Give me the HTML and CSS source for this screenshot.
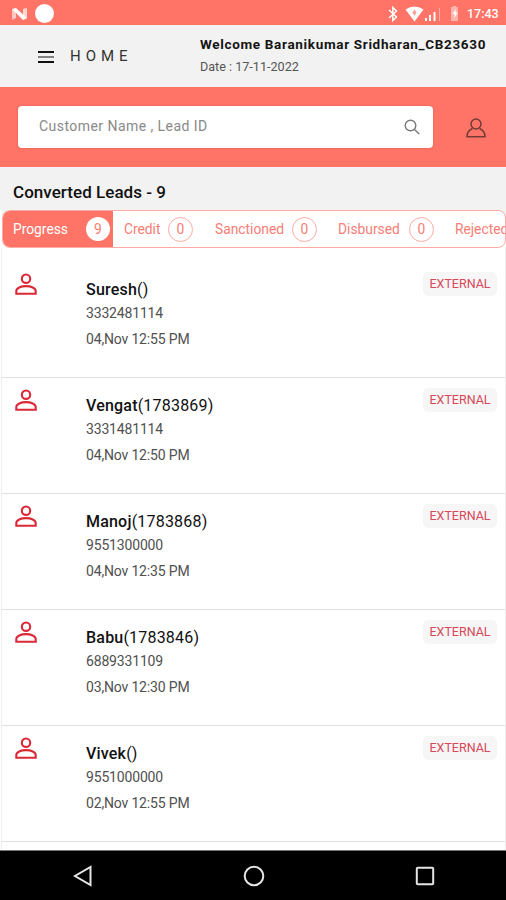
FILE: index.html
```html
<!DOCTYPE html>
<html lang="en">
<head>
<meta charset="utf-8">
<title>Converted Leads</title>
<link rel="stylesheet" href="styles.css">
</head>
<body>
<svg class="defs" width="0" height="0">
  <symbol id="person" viewBox="0 0 22 24">
    <circle cx="11" cy="5.700" r="4.200"/>
    <path d="M1.300 20.700v-2.600c0-3 4.600-5 9.700-5s9.700 2 9.700 5v2.600z"/>
  </symbol>
</svg>
<div class="screen">
  <div class="status">
    <svg class="n-logo" viewBox="0 0 17 14"><path d="M1 3l4-2v10l-4 2z" fill="#ffc9c3"/><path d="M12 2l4-1v10l-4 2z" fill="#ffd8d4"/><path d="M1 2l4-1 11 10-4 2z" fill="#fff"/></svg>
    <span class="dot"></span>
    <svg class="signals" viewBox="0 0 76 20">
      <path d="M4 6l7.500 7-3.700 3.500v-13L11.500 7 4 14" fill="none" stroke="#fff" stroke-width="1.500"/>
      <path d="M20.500 5.500q9-6 18 0L29.500 17.500z" fill="#fff"/>
      <path d="M29.500 5.500l2 3-2 3.500-2-3.500z" fill="#ff9c93"/>
      <path d="M40 14h2v3h-2zM44 11h2v6h-2zM48.500 8h2v9h-2z" fill="#fff"/>
      <path d="M54 4h1v13h-1z" fill="#ffaca4"/>
      <path d="M66 3h2V2h3v1h2v14h-7z" fill="#ffb5ae"/>
      <path d="M70.500 5l-3 5h2v4l3-5.500h-2z" fill="#fff"/>
    </svg>
    <span class="time">17:43</span>
  </div>
  <header class="header">
    <svg class="menu" viewBox="0 0 16 12"><path d="M0 1h16M0 11h16" stroke="#111" stroke-width="1.800"/><path d="M0 6h16" stroke="#777" stroke-width="1.800"/></svg>
    <span class="home">HOME</span>
    <div class="welcome">
      <div class="user">Welcome Baranikumar Sridharan_CB23630</div>
      <div class="date">Date : 17-11-2022</div>
    </div>
  </header>
  <div class="search-band">
    <div class="search">
      <span>Customer Name , Lead ID</span>
      <svg class="glass" viewBox="0 0 16 16"><circle cx="6.500" cy="6.500" r="5.300"/><path d="M10.500 10.500l4.700 4.500"/></svg>
    </div>
    <svg class="profile" viewBox="0 0 20 20"><circle cx="10" cy="6" r="5"/><path d="M6.500 10.500C3 12 1 14.500 1 18.700h18c0-4.200-2-6.700-5.500-8.200"/></svg>
  </div>
  <h1>Converted Leads - 9</h1>
  <nav class="tabs">
    <div class="tab active">Progress<b>9</b></div>
    <div class="tab credit">Credit<b>0</b></div>
    <div class="tab sanctioned">Sanctioned<b>0</b></div>
    <div class="tab disbursed">Disbursed<b>0</b></div>
    <div class="tab rejected">Rejected</div>
  </nav>
  <main class="list">
    <article class="lead"><svg class="avatar"><use href="#person"/></svg><div class="info"><div class="name">Suresh<i>()</i></div><div class="phone">3332481114</div><div class="when">04,Nov 12:55 PM</div></div><span class="badge">EXTERNAL</span></article>
    <article class="lead"><svg class="avatar"><use href="#person"/></svg><div class="info"><div class="name">Vengat<i>(1783869)</i></div><div class="phone">3331481114</div><div class="when">04,Nov 12:50 PM</div></div><span class="badge">EXTERNAL</span></article>
    <article class="lead"><svg class="avatar"><use href="#person"/></svg><div class="info"><div class="name">Manoj<i>(1783868)</i></div><div class="phone">9551300000</div><div class="when">04,Nov 12:35 PM</div></div><span class="badge">EXTERNAL</span></article>
    <article class="lead"><svg class="avatar"><use href="#person"/></svg><div class="info"><div class="name">Babu<i>(1783846)</i></div><div class="phone">6889331109</div><div class="when">03,Nov 12:30 PM</div></div><span class="badge">EXTERNAL</span></article>
    <article class="lead"><svg class="avatar"><use href="#person"/></svg><div class="info"><div class="name">Vivek<i>()</i></div><div class="phone">9551000000</div><div class="when">02,Nov 12:55 PM</div></div><span class="badge">EXTERNAL</span></article>
  </main>
  <footer class="navbar">
    <svg viewBox="0 0 22 22"><path d="M19.500 2v18L4 11z"/></svg>
    <svg viewBox="0 0 22 22"><circle cx="11" cy="11" r="9.300"/></svg>
    <svg viewBox="0 0 22 22"><rect x="2.800" y="2.800" width="16.400" height="16.400" rx="1"/></svg>
  </footer>
</div>
</body>
</html>
```

FILE: styles.css
```css
* { box-sizing: border-box; }
body { margin: 0; font-family: Roboto, "Liberation Sans", sans-serif; background: #fff; }
.defs { display: block; }
.screen { width: 506px; height: 900px; overflow: hidden; display: flex; flex-direction: column; }
.screen > * { flex-shrink: 0; }
.status { height: 25px; background: #ff7467; display: flex; align-items: center; padding: 2px 7px 0 11px; }
.n-logo { width: 17px; height: 14px; }
.dot { width: 19px; height: 19px; border-radius: 50%; background: #fff; margin-left: 7px; }
.signals { width: 76px; height: 20px; margin-left: auto; }
.time { width: 32px; margin-left: 6px; font-size: 12.5px; font-weight: 500; color: #fff; white-space: nowrap; }
.header { height: 62px; background: #f2f2f2; display: flex; padding-left: 38px; white-space: nowrap; }
.menu { width: 16px; height: 12px; margin-top: 26px; }
.home { margin: 20px 0 0 16px; width: 130px; font-size: 15px; line-height: 22px; letter-spacing: 5px; color: #333; }
.user { margin-top: 10px; font-size: 13.5px; line-height: 18px; font-weight: 700; letter-spacing: .67px; color: #151515; }
.date { margin-top: 6px; font-size: 12.6px; line-height: 16px; color: #555; }
.search-band { height: 80px; background: #ff7467; display: flex; padding: 19px 20px 0 18px; }
.search { width: 415px; height: 42px; border-radius: 4px; background: #fff; display: flex; align-items: center; justify-content: space-between; padding: 0 13px 0 21px; font-size: 14px; letter-spacing: .45px; color: #888; box-shadow: 0 0 2px #d95549; }
.search span { margin-top: -2px; }
.glass { width: 16px; height: 16px; fill: none; stroke: #777; stroke-width: 1.4; }
.profile { width: 20px; height: 20px; margin: 12px 0 0 33px; fill: none; stroke: #743b36; stroke-width: 1.5; }
h1 { margin: 0; height: 43px; padding: 3px 0 0 13px; background: #f2f2f2; font-size: 17px; line-height: 44px; font-weight: 500; color: #111; letter-spacing: .04px; }
.tabs { height: 38px; margin-left: 2px; width: 504px; border: 1px solid #ffaaa3; border-radius: 8px; display: flex; overflow: hidden; font-size: 13.8px; color: #f77d75; background: #fff; white-space: nowrap; box-shadow: 0 -8px 0 #f2f2f2; }
.tab { display: flex; align-items: center; justify-content: space-between; height: 36px; flex-shrink: 0; }
.tab b { width: 25px; height: 25px; border: 1px solid #ffaaa3; border-radius: 50%; font-weight: 400; line-height: 23px; text-align: center; }
.active { width: 110px; padding: 0 3px 0 10px; background: #ff7467; color: #fff; }
.active b { width: 24px; height: 24px; background: #fff; color: #f77d75; border: 0; line-height: 24px; }
.credit { width: 69px; margin-left: 11px; }
.sanctioned { width: 102px; margin-left: 22px; }
.disbursed { width: 96px; margin-left: 21px; }
.rejected { margin-left: 21px; }
.list { height: 602px; padding-top: 14px; margin-left: 1px; border-left: 1px solid #eee; border-right: 1px solid #eee; background: #fff; }
.lead { height: 116px; border-bottom: 1px solid #e0e0e0; display: flex; align-items: flex-start; padding: 10px 8px 0 13px; }
.avatar { width: 22px; height: 24px; fill: none; stroke: #dc2836; stroke-width: 2.1; margin-top: 1px; }
.info { margin-left: 49px; width: 337px; white-space: nowrap; }
.name { margin-top: 8px; font-size: 16px; line-height: 20px; font-weight: 500; color: #111; letter-spacing: .2px; }
.name i { font-style: normal; font-weight: 400; }
.phone, .when { font-size: 14px; line-height: 18px; color: #505050; letter-spacing: -.17px; }
.phone { margin-top: 4px; }
.when { margin-top: 8px; }
.badge { width: 74px; height: 24px; margin-left: auto; border-radius: 5px; background: #f6f6f6; color: #d74858; font-size: 12.5px; line-height: 24px; text-align: center; }
.navbar { height: 50px; background: #000; border-top: 1px solid #777; display: flex; justify-content: space-between; align-items: center; padding: 0 70px 0 71px; }
.navbar svg { width: 22px; height: 22px; fill: none; stroke: #e5e5e5; stroke-width: 2; }
```
